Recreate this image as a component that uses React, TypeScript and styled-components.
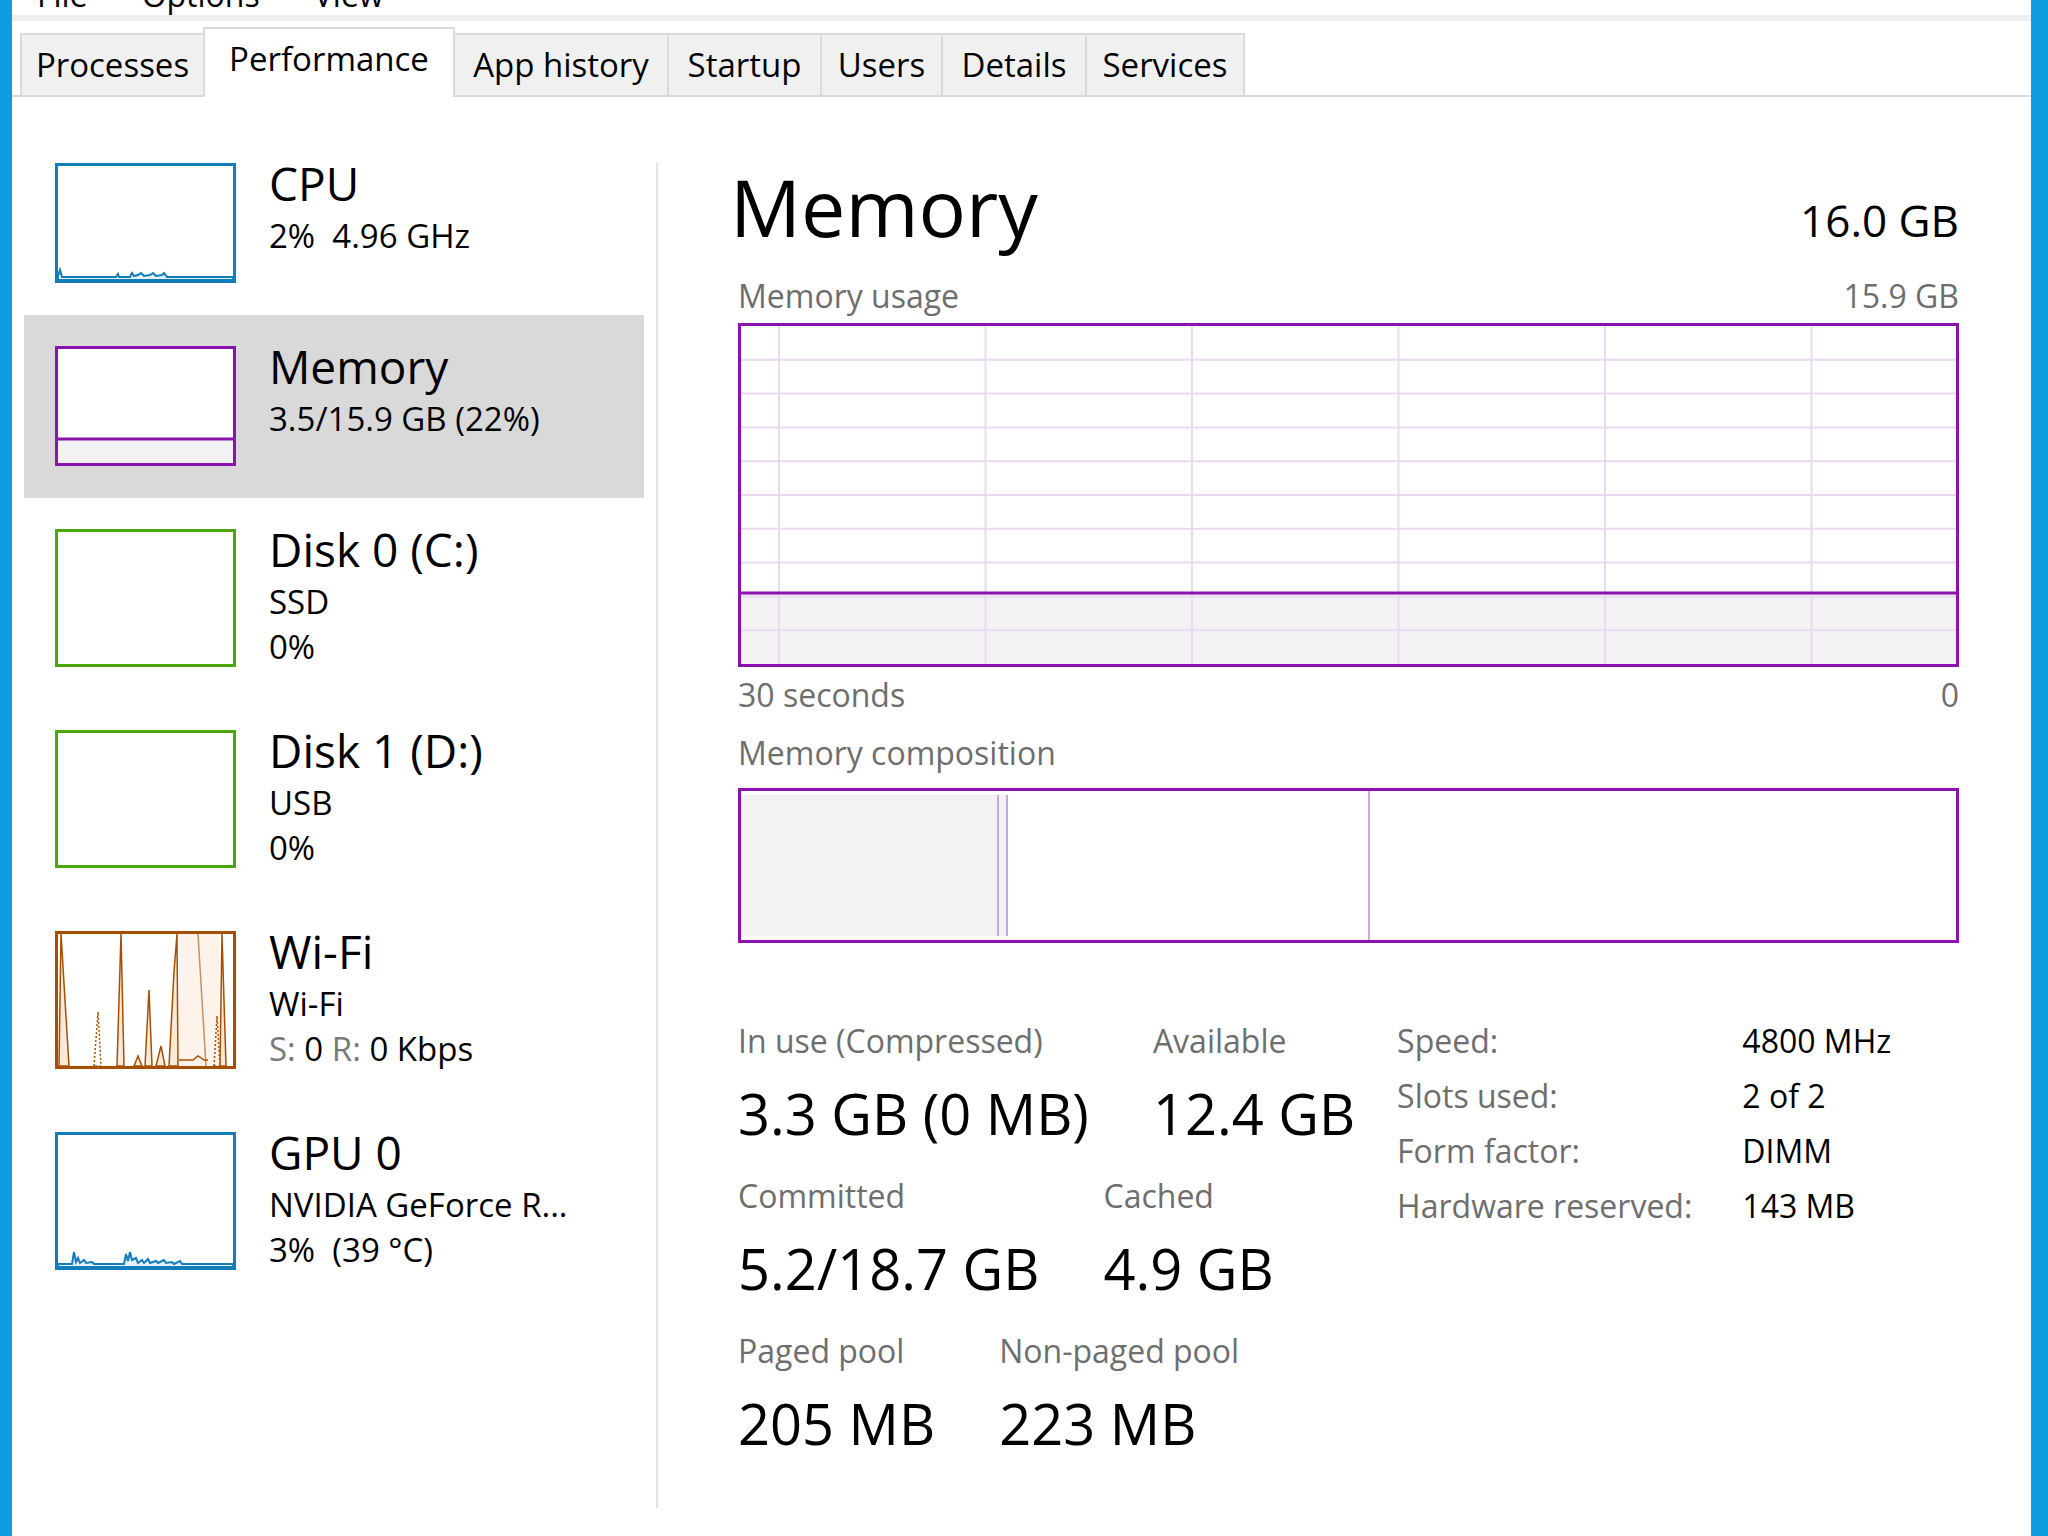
import React from 'react'
import styled, { createGlobalStyle } from 'styled-components'

const ACCENT = '#109ce1'
const PURPLE = '#8b12ae'
const GRID = '#ead9f0'
const FILL = '#f3f1f4'
const GRAY = '#6e6e6e'

const GlobalStyle = createGlobalStyle`
    html, body {
        margin: 0;
        padding: 0;
        background: #fff;
    }
    body {
        font-family: 'Open Sans', 'Noto Sans', sans-serif;
        color: #000;
    }
`

const Window = styled.div`
    width: 2048px;
    height: 1536px;
    box-sizing: border-box;
    border-left: 12px solid ${ACCENT};
    border-right: 17px solid ${ACCENT};
    background: #fff;
    display: flex;
    flex-direction: column;
    overflow: hidden;
`

const MenuBar = styled.div`
    height: 15px;
    border-bottom: 6px solid #efefef;
    display: flex;
    gap: 54px;
    padding-left: 25px;
    overflow: hidden;
`

const MenuItem = styled.span`
    margin-top: -25px;
    font-size: 32px;
    line-height: 40px;
`

const TabStrip = styled.div`
    margin-top: 6px;
    height: 68px;
    display: flex;
    align-items: flex-end;
    padding-left: 8px;
    border-bottom: 2px solid #dadada;
`

const Tab = styled.div<{ $width: number; $active?: boolean }>`
    position: relative;
    z-index: ${p => (p.$active ? 1 : 0)};
    width: ${p => p.$width}px;
    box-sizing: border-box;
    margin-right: -2px;
    margin-bottom: ${p => (p.$active ? -2 : 0)}px;
    border: 2px solid #dadada;
    border-bottom: none;
    background: ${p => (p.$active ? '#fff' : '#f0f0f0')};
    font-size: 33px;
    line-height: 60px;
    padding-bottom: ${p => (p.$active ? 8 : 0)}px;
    text-align: center;
    white-space: nowrap;
`

const Main = styled.div`
    flex: 1;
    display: flex;
`

const Sidebar = styled.div`
    width: 644px;
    padding-top: 35px;
    display: flex;
    flex-direction: column;
`

const Divider = styled.div`
    width: 2px;
    height: 1345px;
    margin-top: 66px;
    background: #e3e3e3;
`

const Item = styled.div<{ $selected?: boolean; $tall?: boolean }>`
    display: flex;
    gap: 33px;
    margin-left: 12px;
    width: 620px;
    height: ${p => (p.$tall ? 201 : 183)}px;
    box-sizing: border-box;
    padding: 31px 0 0 31px;
    background: ${p => (p.$selected ? '#d9d9d9' : 'transparent')};
`

const Thumb = styled.div<{ $color: string; $tall?: boolean }>`
    flex: none;
    width: 181px;
    height: ${p => (p.$tall ? 138 : 120)}px;
    box-sizing: border-box;
    border: 3px solid ${p => p.$color};
    background: #fff;
    svg {
        display: block;
        width: 100%;
        height: 100%;
    }
`

const ItemText = styled.div`
    display: flex;
    flex-direction: column;
    white-space: pre;
`

const ItemTitle = styled.div`
    font-size: 46px;
    line-height: 40px;
`

const ItemLines = styled.div`
    margin-top: 10px;
    font-size: 33px;
    line-height: 45px;
`

const Dim = styled.span`
    color: #7a7a7a;
`

const Detail = styled.div`
    width: 1221px;
    padding: 65px 0 0 80px;
    display: flex;
    flex-direction: column;
`

const Header = styled.div`
    display: flex;
    justify-content: space-between;
    align-items: baseline;
`

const Title = styled.div`
    margin-left: -8px;
    font-size: 79px;
    line-height: 90px;
`

const Total = styled.div`
    font-size: 44px;
`

const CaptionRow = styled.div<{ $top: number }>`
    margin-top: ${p => p.$top}px;
    display: flex;
    justify-content: space-between;
    font-size: 32px;
    line-height: 40px;
    color: ${GRAY};
`

const Chart = styled.div<{ $height: number; $top: number }>`
    margin-top: ${p => p.$top}px;
    height: ${p => p.$height}px;
    box-sizing: border-box;
    border: 3px solid ${PURPLE};
    display: flex;
    svg {
        display: block;
        width: 100%;
        height: 100%;
    }
`

const Segment = styled.div<{ $fill?: boolean; $edge?: boolean; $grow?: boolean }>`
    flex: ${p => (p.$grow ? '1' : 'none')};
    box-sizing: border-box;
    margin: ${p => (p.$fill ? '4px 0' : '0')};
    background: ${p => (p.$fill ? FILL : '#fff')};
    border-right: ${p => (p.$edge ? `2px solid #cda6db` : 'none')};
`

const Stats = styled.div`
    margin-top: 78px;
    display: flex;
    gap: 42px;
    align-items: flex-start;
`

const StatColumn = styled.div`
    display: flex;
    flex-direction: column;
    gap: 28px;
`

const StatRow = styled.div`
    display: flex;
    gap: 64px;
`

const Stat = styled.div`
    display: flex;
    flex-direction: column;
    white-space: nowrap;
`

const StatLabel = styled.div`
    font-size: 32px;
    line-height: 40px;
    color: ${GRAY};
`

const StatValue = styled.div`
    margin-top: 17px;
    font-size: 56px;
    line-height: 70px;
`

const Specs = styled.div`
    display: grid;
    grid-template-columns: auto auto;
    column-gap: 50px;
    row-gap: 15px;
    font-size: 32px;
    line-height: 40px;
    white-space: nowrap;
`

const SpecLabel = styled.div`
    color: ${GRAY};
`

const TABS = [
    { name: 'Processes', width: 185 },
    { name: 'Performance', width: 252, active: true },
    { name: 'App history', width: 216 },
    { name: 'Startup', width: 155 },
    { name: 'Users', width: 123 },
    { name: 'Details', width: 146 },
    { name: 'Services', width: 160 },
]

const CpuSpark = () => (
    <svg viewBox='0 0 175 114' preserveAspectRatio='none'>
        <path
            d='M0 114 L0 110 L2 104 L4 111 L58 111 L60 108 L61 111 L72 111 L74 107 L76 110 L80 109 L83 107 L86 110 L92 109 L95 107 L98 110 L104 109 L106 107 L109 111 L175 111 L175 114 Z'
            fill='#e6f0f8'
            stroke='#117dbb'
            strokeWidth='2'
        />
    </svg>
)

const MemorySpark = () => (
    <svg viewBox='0 0 175 114' preserveAspectRatio='none'>
        <rect x='0' y='90' width='175' height='24' fill={FILL} />
        <line x1='0' y1='90' x2='175' y2='90' stroke={PURPLE} strokeWidth='3' />
    </svg>
)

const WifiSpark = () => (
    <svg viewBox='0 0 175 132' preserveAspectRatio='none'>
        <rect x='121' y='0' width='40' height='132' fill='#fdf3ea' />
        <g fill='#fbe9da' stroke='#a74f01' strokeWidth='1.5'>
            <polygon points='1,132 3,0 11,132' />
            <polygon points='59,132 63,0 66,132' />
            <polygon points='36,132 40,78 43,132' strokeDasharray='2 2' fill='none' />
            <polygon points='76,132 80,122 84,132' />
            <polygon points='87,132 91,56 94,132' />
            <polygon points='98,132 103,112 107,132' />
            <polygon points='111,132 116,38 119,0 120,132' />
            <polyline points='121,126 135,126 140,122 146,126 150,126' fill='none' />
            <polyline points='140,0 148,132' fill='none' strokeOpacity='0.6' />
            <polygon points='156,132 159,82 162,132' strokeDasharray='2 2' fill='none' />
            <polygon points='162,132 164,0 168,132' />
        </g>
    </svg>
)

const GpuSpark = () => (
    <svg viewBox='0 0 175 132' preserveAspectRatio='none'>
        <path
            d='M0 132 L0 129 L14 129 L16 117 L18 127 L20 123 L22 128 L26 125 L28 128 L34 127 L36 129 L66 129 L68 119 L70 126 L72 117 L74 125 L78 123 L80 128 L84 125 L86 128 L90 124 L92 128 L98 126 L100 128 L106 125 L108 128 L114 127 L116 129 L122 126 L124 129 L175 129 L175 132 Z'
            fill='#e6f0f8'
            stroke='#117dbb'
            strokeWidth='2'
        />
    </svg>
)

const EmptySpark = () => <svg viewBox='0 0 175 132' />

const ITEMS = [
    { title: 'CPU', lines: ['2%  4.96 GHz'], color: '#117dbb', spark: <CpuSpark /> },
    { title: 'Memory', lines: ['3.5/15.9 GB (22%)'], color: PURPLE, spark: <MemorySpark />, selected: true },
    { title: 'Disk 0 (C:)', lines: ['SSD', '0%'], color: '#4da60c', spark: <EmptySpark />, tall: true },
    { title: 'Disk 1 (D:)', lines: ['USB', '0%'], color: '#4da60c', spark: <EmptySpark />, tall: true },
    { title: 'Wi-Fi', lines: ['Wi-Fi', 'wifi-rate'], color: '#a74f01', spark: <WifiSpark />, tall: true },
    { title: 'GPU 0', lines: ['NVIDIA GeForce R...', '3%  (39 °C)'], color: '#117dbb', spark: <GpuSpark />, tall: true },
]

const USAGE_W = 1215
const USAGE_H = 338
const USAGE_LEVEL = 0.21

const UsageGraph = () => {
    const rows = Array.from({ length: 9 }, (_, i) => (USAGE_H / 10) * (i + 1))
    const cols = Array.from({ length: 6 }, (_, i) => 38 + 206.5 * i)
    const y = USAGE_H * (1 - USAGE_LEVEL)
    return (
        <svg viewBox={`0 0 ${USAGE_W} ${USAGE_H}`} preserveAspectRatio='none'>
            <rect x='0' y={y} width={USAGE_W} height={USAGE_H - y} fill={FILL} />
            {rows.map(r => (
                <line key={'r' + r} x1='0' x2={USAGE_W} y1={r} y2={r} stroke={GRID} strokeWidth='2' />
            ))}
            {cols.map(c => (
                <line key={'c' + c} x1={c} x2={c} y1='0' y2={USAGE_H} stroke={GRID} strokeWidth='2' />
            ))}
            <line x1='0' x2={USAGE_W} y1={y} y2={y} stroke={PURPLE} strokeWidth='3' />
        </svg>
    )
}

const STATS = [
    [['In use (Compressed)', '3.3 GB (0 MB)'], ['Available', '12.4 GB']],
    [['Committed', '5.2/18.7 GB'], ['Cached', '4.9 GB']],
    [['Paged pool', '205 MB'], ['Non-paged pool', '223 MB']],
]

const SPECS = [
    ['Speed:', '4800 MHz'],
    ['Slots used:', '2 of 2'],
    ['Form factor:', 'DIMM'],
    ['Hardware reserved:', '143 MB'],
]

const App: React.FC = () => {
    return (
        <Window>
            <GlobalStyle />
            <MenuBar>
                <MenuItem>File</MenuItem>
                <MenuItem>Options</MenuItem>
                <MenuItem>View</MenuItem>
            </MenuBar>
            <TabStrip>
                {TABS.map(t => (
                    <Tab key={t.name} $width={t.width} $active={t.active}>{t.name}</Tab>
                ))}
            </TabStrip>
            <Main>
                <Sidebar>
                    {ITEMS.map(it => (
                        <Item key={it.title} $selected={it.selected} $tall={it.tall}>
                            <Thumb $color={it.color} $tall={it.tall}>{it.spark}</Thumb>
                            <ItemText>
                                <ItemTitle>{it.title}</ItemTitle>
                                <ItemLines>
                                    {it.lines.map(l =>
                                        l === 'wifi-rate'
                                            ? <div key={l}><Dim>S:</Dim> 0 <Dim>R:</Dim> 0 Kbps</div>
                                            : <div key={l}>{l}</div>
                                    )}
                                </ItemLines>
                            </ItemText>
                        </Item>
                    ))}
                </Sidebar>
                <Divider />
                <Detail>
                    <Header>
                        <Title>Memory</Title>
                        <Total>16.0 GB</Total>
                    </Header>
                    <CaptionRow $top={24}>
                        <span>Memory usage</span>
                        <span>15.9 GB</span>
                    </CaptionRow>
                    <Chart $height={344} $top={7}>
                        <UsageGraph />
                    </Chart>
                    <CaptionRow $top={8}>
                        <span>30 seconds</span>
                        <span>0</span>
                    </CaptionRow>
                    <CaptionRow $top={18}>
                        <span>Memory composition</span>
                    </CaptionRow>
                    <Chart $height={155} $top={15}>
                        <Segment $fill style={{ width: 256 }} />
                        <Segment $fill $edge style={{ width: 11, borderLeft: '2px solid #cda6db' }} />
                        <Segment $edge style={{ width: 362 }} />
                        <Segment $grow />
                    </Chart>
                    <Stats>
                        <StatColumn>
                            {STATS.map((row, i) => (
                                <StatRow key={i}>
                                    {row.map(([label, value]) => (
                                        <Stat key={label}>
                                            <StatLabel>{label}</StatLabel>
                                            <StatValue>{value}</StatValue>
                                        </Stat>
                                    ))}
                                </StatRow>
                            ))}
                        </StatColumn>
                        <Specs>
                            {SPECS.map(([label, value]) => (
                                <React.Fragment key={label}>
                                    <SpecLabel>{label}</SpecLabel>
                                    <div>{value}</div>
                                </React.Fragment>
                            ))}
                        </Specs>
                    </Stats>
                </Detail>
            </Main>
        </Window>
    )
}

export default App
